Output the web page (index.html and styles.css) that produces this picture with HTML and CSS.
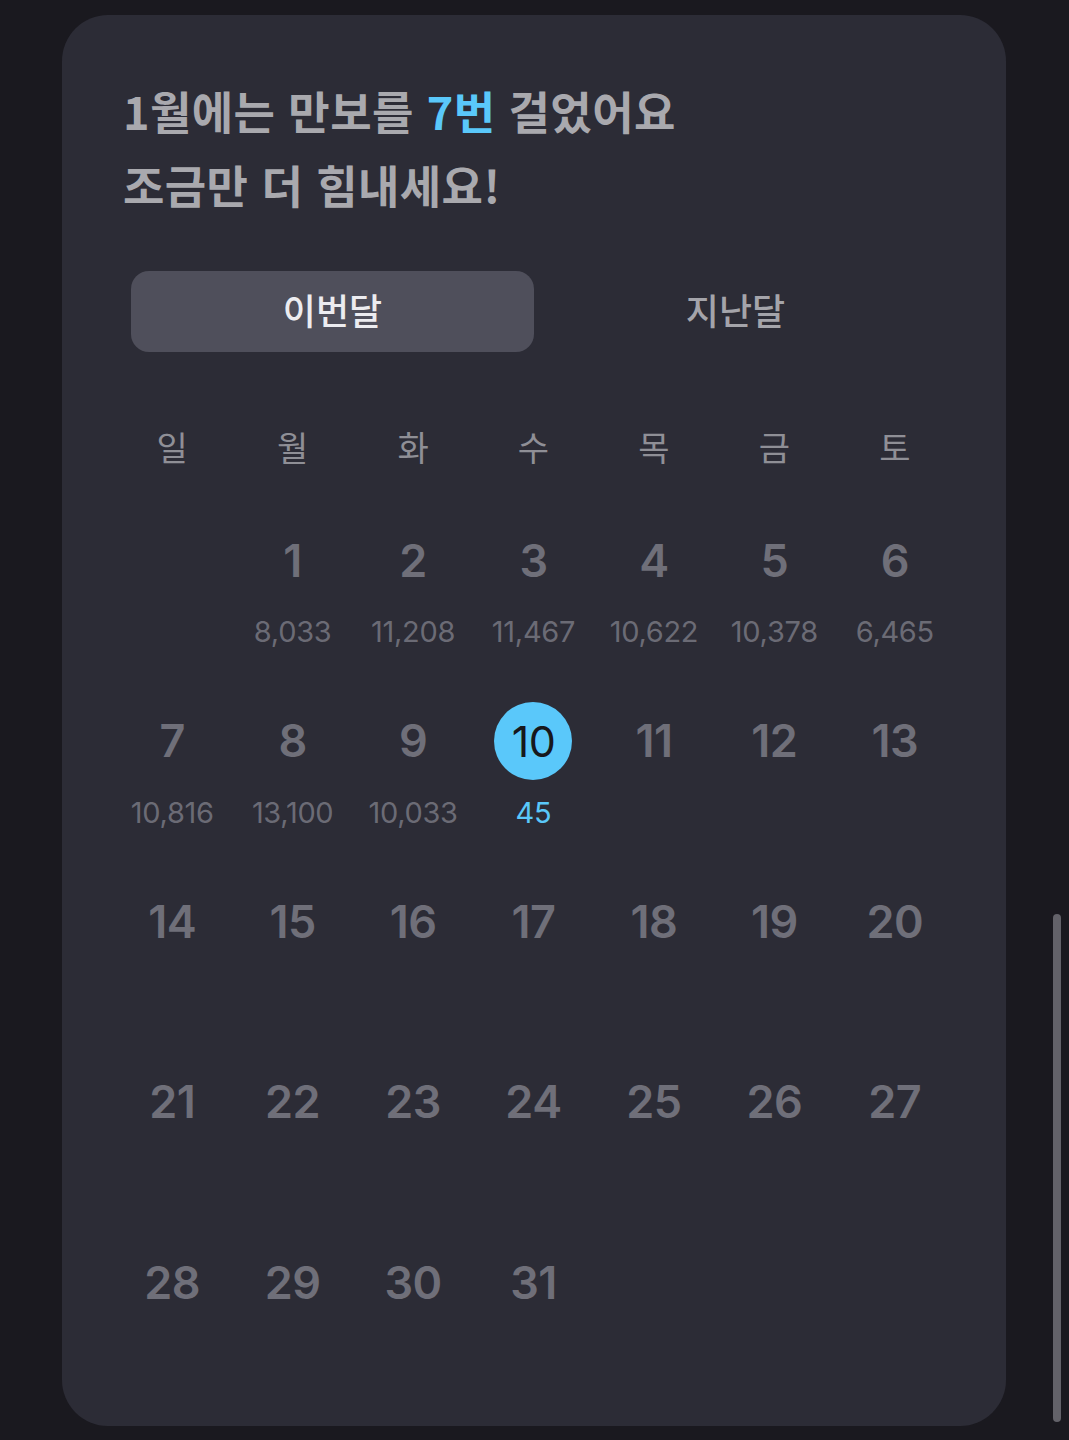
FILE: index.html
```html
<!DOCTYPE html>
<html lang="ko">
<head>
<meta charset="utf-8">
<title>만보 캘린더</title>
<link rel="stylesheet" href="styles.css">
</head>
<body>
<div class="card">
  <h1 class="title">1월에는 만보를 <span class="hl">7번</span> 걸었어요<br>조금만 더 힘내세요!</h1>
  <div class="seg">
    <div class="seg-item active">이번달</div>
    <div class="seg-item">지난달</div>
  </div>
  <div class="weekdays">
    <div>일</div><div>월</div><div>화</div><div>수</div><div>목</div><div>금</div><div>토</div>
  </div>
  <div class="days">
    <div class="day empty"></div>
    <div class="day"><span class="num">1</span><span class="steps">8,033</span></div>
    <div class="day"><span class="num">2</span><span class="steps">11,208</span></div>
    <div class="day"><span class="num">3</span><span class="steps">11,467</span></div>
    <div class="day"><span class="num">4</span><span class="steps">10,622</span></div>
    <div class="day"><span class="num">5</span><span class="steps">10,378</span></div>
    <div class="day"><span class="num">6</span><span class="steps">6,465</span></div>
    <div class="day"><span class="num">7</span><span class="steps">10,816</span></div>
    <div class="day"><span class="num">8</span><span class="steps">13,100</span></div>
    <div class="day"><span class="num">9</span><span class="steps">10,033</span></div>
    <div class="day today"><span class="num">10</span><span class="steps">45</span></div>
    <div class="day"><span class="num">11</span></div>
    <div class="day"><span class="num">12</span></div>
    <div class="day"><span class="num">13</span></div>
    <div class="day"><span class="num">14</span></div>
    <div class="day"><span class="num">15</span></div>
    <div class="day"><span class="num">16</span></div>
    <div class="day"><span class="num">17</span></div>
    <div class="day"><span class="num">18</span></div>
    <div class="day"><span class="num">19</span></div>
    <div class="day"><span class="num">20</span></div>
    <div class="day"><span class="num">21</span></div>
    <div class="day"><span class="num">22</span></div>
    <div class="day"><span class="num">23</span></div>
    <div class="day"><span class="num">24</span></div>
    <div class="day"><span class="num">25</span></div>
    <div class="day"><span class="num">26</span></div>
    <div class="day"><span class="num">27</span></div>
    <div class="day"><span class="num">28</span></div>
    <div class="day"><span class="num">29</span></div>
    <div class="day"><span class="num">30</span></div>
    <div class="day"><span class="num">31</span></div>
  </div>
</div>
<div class="scrollbar"></div>
</body>
</html>
```

FILE: styles.css
```css
html, body {
  margin: 0;
  padding: 0;
}
body {
  background: #1a191f;
  width: 1069px;
  height: 1440px;
  overflow: hidden;
  position: relative;
  font-family: "Noto Sans CJK KR", "Noto Sans", sans-serif;
}
.card {
  box-sizing: border-box;
  margin: 15px 0 0 62px;
  width: 944px;
  height: 1411px;
  border-radius: 46px;
  background: #2c2c36;
  padding: 59px 50px 0 50px;
}
.title {
  margin: 0 0 0 11px;
  font-size: 45px;
  line-height: 74px;
  font-weight: 700;
  color: #a9a9ae;
  letter-spacing: 0.4px;
}
.title .hl {
  color: #5ac8fa;
}
.seg {
  display: flex;
  margin: 49px 0 0 19px;
  width: 806px;
  height: 81px;
}
.seg-item {
  flex: 1;
  display: flex;
  align-items: center;
  justify-content: center;
  padding-bottom: 5px;
  font-size: 36px;
  font-weight: 500;
  color: #a4a4aa;
  border-radius: 18px;
}
.seg-item.active {
  background: #4f4f5b;
  color: #ececf0;
}
.weekdays {
  display: grid;
  grid-template-columns: repeat(7, 1fr);
  width: 843px;
  height: 60px;
  margin-top: 64px;
  align-items: center;
  justify-items: center;
  font-size: 34px;
  color: #8f8f96;
}
.days {
  display: grid;
  grid-template-columns: repeat(7, 1fr);
  grid-auto-rows: 131px;
  row-gap: 49.5px;
  width: 843px;
  margin-top: 45px;
  font-family: Inter, "Noto Sans", sans-serif;
}
.day {
  display: flex;
  flex-direction: column;
  align-items: center;
}
.num {
  width: 78px;
  height: 78px;
  border-radius: 50%;
  display: flex;
  align-items: center;
  justify-content: center;
  font-size: 45px;
  font-weight: 600;
  color: #6f6f79;
  letter-spacing: -0.5px;
}
.steps {
  margin-top: 13px;
  height: 40px;
  line-height: 40px;
  font-size: 29px;
  color: #6b6b75;
  letter-spacing: -0.3px;
}
.today .num {
  background: #5ac8fa;
  color: #17181c;
  font-weight: 400;
  font-size: 43px;
}
.today .steps {
  color: #5ac8fa;
}
.scrollbar {
  position: absolute;
  left: 1053px;
  top: 914px;
  width: 8px;
  height: 508px;
  border-radius: 4px;
  background: #636269;
}
```
